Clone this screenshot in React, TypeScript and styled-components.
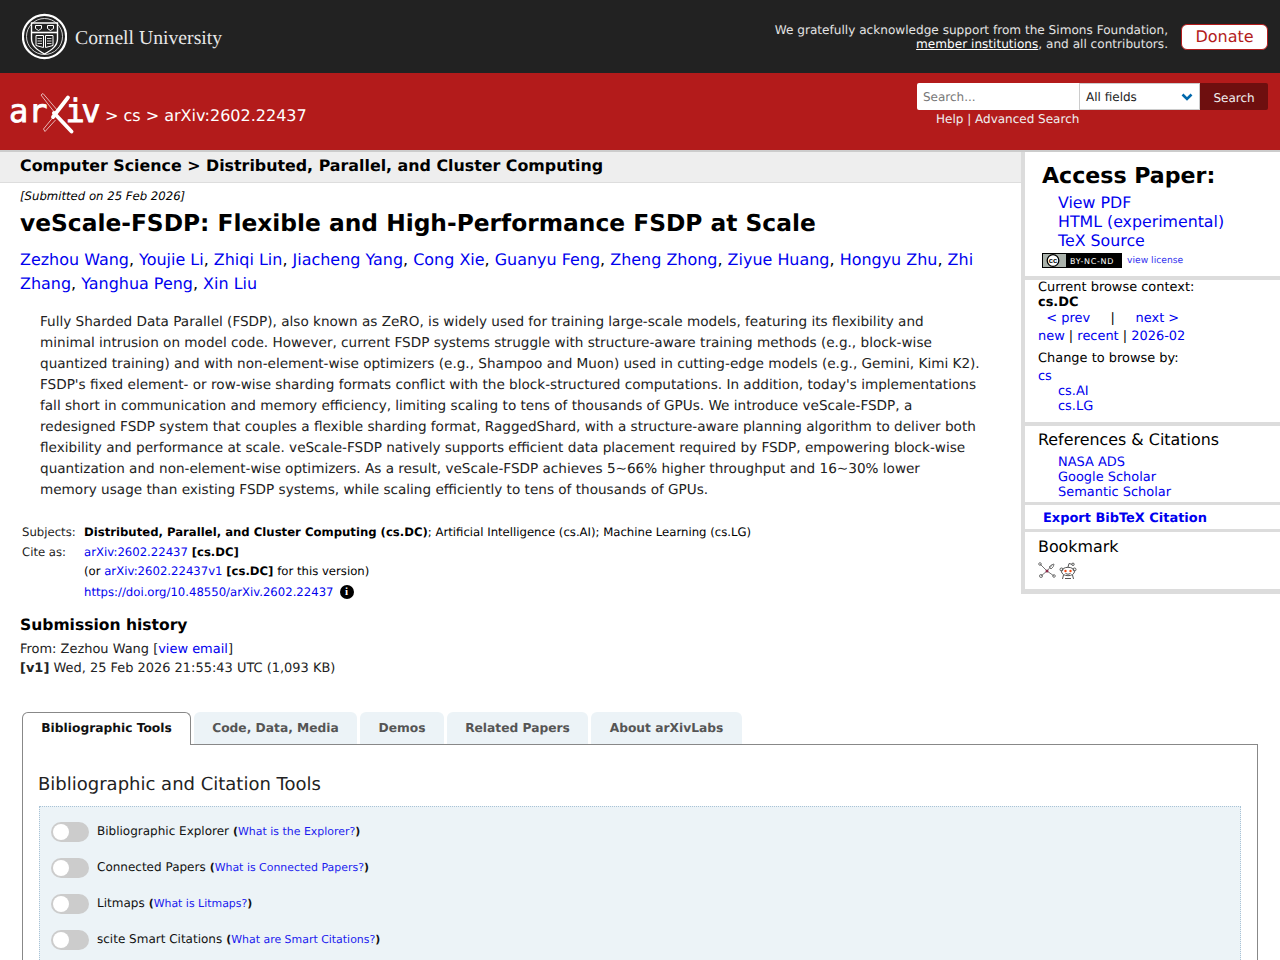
import React from "react";
import styled, { createGlobalStyle } from "styled-components";

const Global = createGlobalStyle`
  html, body { margin: 0; padding: 0; background: #fff; }
  body { font-family: "DejaVu Sans", "Liberation Sans", sans-serif; font-size: 14px; color: #000; height: 960px; overflow: hidden; text-rendering: geometricPrecision; }
  a { color: #0000ee; text-decoration: none; }
`;

const CornellBar = styled.div`
  height: 73px; background: #222; display: flex; align-items: flex-start; justify-content: space-between;
  padding: 13px 12px 0 22px; box-sizing: border-box; color: #ddd;
`;
const CornellLogo = styled.div`display: flex; align-items: center; gap: 8px; height: 47px;`;
const CornellWord = styled.span`
  font-family: "Liberation Serif", serif; font-size: 19.7px; color: #e8e8e8; position: relative; top: 2px;
`;
const Support = styled.div`display: flex; align-items: center; gap: 13px; height: 47px;`;
const SupportText = styled.div`
  text-align: right; font-size: 12.1px; line-height: 14px; color: #e4e4e4;
  a { color: #fff; text-decoration: underline; }
`;
const DonateButton = styled.a`
  width: 87px; height: 26px; box-sizing: border-box; background: #fff; border: 1px solid #b31b1b; border-radius: 6px;
  color: #b31b1b; font-size: 16px; line-height: 23px; text-align: center; display: block;
`;

const RedBar = styled.div`
  height: 77px; background: #b31b1b; display: flex; justify-content: space-between; padding: 10px 12px 0 10px;
  box-sizing: border-box; color: #fff;
`;
const Crumbs = styled.div`display: flex; align-items: center; height: 60px; font-size: 16px; color: #fff; gap: 5px;`;
const CrumbText = styled.span`position: relative; top: 2px;`;
const ArxivLogo = styled.div`
  position: relative; width: 90px; height: 40px; display: flex; align-items: center; justify-content: space-between;
`;
const LogoText = styled.span<{ $tight?: boolean }>`
  font-family: "DejaVu Sans Mono", monospace; font-weight: 400; font-size: 32px; line-height: 40px; color: #fff; position: relative; top: -2px;
  -webkit-text-stroke: 0.8px #fff;
  letter-spacing: ${(p) => (p.$tight ? "-3.5px" : "0")};
  margin: ${(p) => (p.$tight ? "0 3px 0 0" : "0 0 0 -1px")};
`;
const LogoX = styled.svg`position: absolute; left: 30px; top: 0;`;
const SearchArea = styled.div`display: flex; flex-direction: column; width: 351px;`;
const SearchRow = styled.div`display: flex; height: 27px;`;
const SearchInput = styled.div`
  width: 162px; box-sizing: border-box; background: #fff; color: #777; font-size: 12px; line-height: 29px; padding-left: 6px; border-radius: 2px 0 0 2px;
`;
const SearchSelect = styled.div`
  width: 121px; box-sizing: border-box; background: #fff; border: 1px solid #ccc; color: #222; font-size: 12px; line-height: 27px;
  display: flex; justify-content: space-between; align-items: center; padding: 0 6px;
`;
const SelectLabel = styled.span`position: relative; top: 1px;`;
const SearchButton = styled.div`
  width: 68px; background: #6e0f0f; color: #f0f0f0; font-size: 12px; line-height: 31px; text-align: center; border-radius: 0 2px 2px 0;
`;
const SearchLinks = styled.div`font-size: 12px; line-height: 14px; color: #f0f0f0; padding: 2px 0 0 19px;`;

const Shell = styled.div`display: flex; align-items: flex-start; border-top: 2px solid #ccc; height: 808px; overflow: hidden;`;
const Main = styled.main`flex: 1; min-width: 0;`;
const Side = styled.aside`
  width: 259px; flex: none; background: #dcdcdc; border-left: 4px solid #dcdcdc; border-bottom: 5px solid #dcdcdc; box-sizing: border-box;
`;
const SideBlock = styled.div<{ $h: number; $gap?: number }>`
  background: #fff; height: ${(p) => p.$h}px; margin-bottom: ${(p) => p.$gap ?? 4}px; padding-left: 13px; box-sizing: border-box; overflow: hidden;
`;
const AccessTitle = styled.h2`margin: 0; padding: 11px 0 0 4px; font-size: 22.1px; line-height: 27px; font-weight: 700;`;
const AccessLinks = styled.div`
  padding: 3px 0 0 20px; font-size: 15.8px; line-height: 19px;
  a { display: block; }
`;
const LicenseRow = styled.div`display: flex; align-items: center; gap: 5px; padding: 3px 0 0 4px;`;
const Badge = styled.svg`display: block;`;
const LicenseLink = styled.a`font-size: 9.2px; color: #3333ee;`;
const Line = styled.div<{ $h?: number; $pad?: number }>`
  font-size: 12.95px; line-height: ${(p) => p.$h ?? 15}px; height: ${(p) => p.$h ?? 15}px; padding-left: ${(p) => p.$pad ?? 0}px; white-space: pre;
`;
const Gap = styled.div<{ $h: number }>`height: ${(p) => p.$h}px;`;
const SideHeading = styled.h3<{ $top: number }>`margin: 0; font-size: 15.9px; line-height: 19px; font-weight: 400; padding-top: ${(p) => p.$top}px;`;
const SideList = styled.div`
  padding: 6px 0 0 20px; font-size: 12.95px; line-height: 15px;
  a { display: block; }
`;
const ExportLink = styled.a`display: block; padding: 6px 0 0 5px; font-size: 12.95px; line-height: 16px; font-weight: 700;`;
const BookIcons = styled.div`display: flex; gap: 3px; padding-top: 6px;`;

const Subheader = styled.div`
  height: 31px; background: #eee; border-bottom: 1px solid #ddd; box-sizing: border-box; padding: 4px 0 0 20px; font-size: 15.85px; line-height: 20px; font-weight: 700;
`;
const Paper = styled.div`padding: 0 20px;`;
const Dateline = styled.div`font-size: 11.69px; font-style: italic; line-height: 14px; padding-top: 6px;`;
const Title = styled.h1`margin: 0; font-size: 23.33px; line-height: 29px; font-weight: 700; padding-top: 6px;`;
const Authors = styled.div`font-size: 15.96px; line-height: 24px; padding-top: 10px; width: 970px;`;
const Abstract = styled.blockquote`
  margin: 0; padding: 16px 0 0 20px; width: 940px; font-size: 13.6px; line-height: 21px; color: #222;
`;
const Meta = styled.table`
  border-collapse: collapse; margin: 24px 0 0 0; font-size: 11.68px; line-height: 14px;
  td { padding: 0 2px; vertical-align: top; }
  td:first-child { width: 56px; padding-right: 4px; color: #222; }
  tr { height: 20px; }
  tr:nth-child(2) { height: 19px; }
  tr:nth-child(3) { height: 21px; }
`;
const InfoDot = styled.span`
  display: inline-block; width: 14px; height: 14px; border-radius: 50%; background: #000; color: #fff; font-family: "Liberation Serif", serif; font-weight: 700; font-size: 11px; line-height: 14px; text-align: center; margin-left: 6px; position: relative; top: -1px;
`;
const HistoryTitle = styled.h2`margin: 0; padding-top: 10px; font-size: 15.55px; line-height: 20px; font-weight: 700;`;
const History = styled.div`font-size: 12.96px; line-height: 19px; padding-top: 5px; color: #222;`;

const Tabs = styled.div`display: flex; align-items: flex-start; gap: 3px; margin: 34px 0 0 22px; height: 33px; position: relative; z-index: 1;`;
const Tab = styled.div<{ $active?: boolean; $w: number }>`
  box-sizing: border-box; width: ${(p) => p.$w}px; height: ${(p) => (p.$active ? 33 : 32)}px; text-align: center;
  padding-top: ${(p) => (p.$active ? 8 : 9)}px; font-size: 12.25px; line-height: 15px; font-weight: 700; border-radius: 6px 6px 0 0;
  background: ${(p) => (p.$active ? "#fff" : "#ecf3f7")}; color: ${(p) => (p.$active ? "#111" : "#555")};
  border: ${(p) => (p.$active ? "1px solid #888" : "0")}; border-bottom: 0; white-space: nowrap;
`;
const Panel = styled.div`
  margin: -1px 0 0 22px; border: 1px solid #888; padding: 28px 16px 0 15px; box-sizing: border-box; height: 300px; width: 1236px;
`;
const PanelTitle = styled.h3`margin: 0; font-size: 18px; line-height: 24px; font-weight: 400; color: #222;`;
const ToolBox = styled.div`
  margin-top: 9px; margin-left: 1px; background: #ecf3f7; border: 1px dotted #a9c3d6; padding: 7px 11px 0; width: 1202px; height: 200px; box-sizing: border-box;
`;
const ToolRow = styled.div`display: flex; align-items: center; height: 36px;`;
const Toggle = styled.span`
  position: relative; width: 38px; height: 20px; border-radius: 10px; background: #ccc; flex: none; margin-right: 8px;
  &::after { content: ""; position: absolute; left: 2px; top: 2px; width: 16px; height: 16px; border-radius: 50%; background: #fff; }
`;
const ToolName = styled.span`font-size: 12px; color: #111; position: relative; top: -1px;`;
const ToolHelp = styled.span`font-size: 10.95px; font-weight: 700; margin-left: 4px; color: #111; position: relative; top: -1px; a { font-weight: 400; color: #1a1aee; }`;

const Join = ({ items }: { items: string[] }) => (
  <>
    {items.map((a, i) => (
      <React.Fragment key={a}>
        <a href="#">{a}</a>
        {i < items.length - 1 ? ", " : ""}
      </React.Fragment>
    ))}
  </>
);

const Seal = () => (
  <svg width="45" height="47" viewBox="0 0 45 47" fill="none" stroke="#fff">
    <circle cx="22.5" cy="23.5" r="21.6" strokeWidth="2.2" />
    <circle cx="22.5" cy="23.5" r="18" strokeWidth="0.8" />
    <path d="M9.500 10h26v16c0 7-6 11-13 15C15.500 37 9.500 33 9.500 26z" strokeWidth="1.4" />
    <path d="M9.500 19.500h26" strokeWidth="1.6" />
    <path d="M13.500 12.500h6v3l-3 2-3-2zM25.500 12.500h6v3l-3 2-3-2z" strokeWidth="1" />
    <path d="M14 22.500h7.500v12l-7.500-2zM31 22.500h-7.500v12l7.500-2z" strokeWidth="1" />
    <path d="M15.500 25.500h4.500M15.500 28h4.500M15.500 30.500h4.500M25 25.500h4.500M25 28h4.500M25 30.500h4.500" strokeWidth="0.8" />
  </svg>
);

const SpiralX = () => (
  <LogoX width="34" height="41" viewBox="0 0 34 41" fill="none">
    <path d="M1 2 L3 0.500 L18 18 L15 20 Z" stroke="#ecc8c8" strokeWidth="0.9" />
    <path d="M12.500 25 L3.500 36 L5 38.500 L15.500 27" stroke="#ecc8c8" strokeWidth="0.9" />
    <path d="M14 20 L31.500 38.500" stroke="#fff" strokeWidth="3.800" strokeLinecap="round" />
    <path d="M13 24 L28 4.500" stroke="#fff" strokeWidth="3.800" strokeLinecap="round" />
  </LogoX>
);

const Chevron = () => (
  <svg width="12" height="8" viewBox="0 0 12 8" fill="none">
    <path d="M1.500 1.500 L6 6 L10.500 1.500" stroke="#0068ac" strokeWidth="2.600" />
  </svg>
);

const CcBadge = () => (
  <Badge width="80" height="15" viewBox="0 0 80 15">
    <rect x="0" y="0" width="80" height="15" fill="#000" />
    <rect x="1" y="1" width="23" height="13" fill="#aab2ab" />
    <circle cx="11" cy="7.500" r="5.800" fill="#fff" stroke="#000" strokeWidth="1.300" />
    <text x="11" y="10" fontSize="7.500" fontWeight="700" textAnchor="middle" fontFamily="Liberation Sans" fill="#000">cc</text>
    <text x="28" y="10.500" fontSize="8" fontFamily="DejaVu Sans" letterSpacing="0.700" fill="#fff">BY-NC-ND</text>
  </Badge>
);

const ScienceWise = () => (
  <svg width="18" height="16" viewBox="0 0 18 16" fill="none" stroke="#777" strokeWidth="1">
    <path d="M9 9 L2 2 M9 9 L16 14 M9 9 L3 14 M9 9 L15 2" />
    <circle cx="2" cy="2" r="1.300" />
    <circle cx="3" cy="14" r="1.500" />
    <circle cx="16" cy="14" r="1.300" />
    <path d="M11 5 q3-3 5-3 q0 3-3 5z" />
    <circle cx="9" cy="9" r="1.500" fill="#8b2a4a" stroke="none" />
  </svg>
);

const Reddit = () => (
  <svg width="18" height="18" viewBox="0 0 18 18" fill="none" stroke="#555" strokeWidth="1">
    <ellipse cx="9" cy="9.500" rx="6.500" ry="4.200" fill="#fff" />
    <circle cx="2.500" cy="7.500" r="1.500" />
    <circle cx="15.500" cy="7.500" r="1.500" />
    <path d="M9 5 L10 1.500 L13 2.300" />
    <circle cx="14" cy="2.300" r="1.200" />
    <circle cx="6.500" cy="9" r="1.200" fill="#f04a14" stroke="none" />
    <circle cx="11.500" cy="9" r="1.200" fill="#f04a14" stroke="none" />
    <path d="M4.500 13 L3.500 17 M13.500 13 L14.500 17 M6 16.500 h6 M6.500 11.500 q2.500 1.500 5 0" />
  </svg>
);

const tabs: [string, number][] = [
  ["Bibliographic Tools", 169],
  ["Code, Data, Media", 163],
  ["Demos", 84],
  ["Related Papers", 141],
  ["About arXivLabs", 151],
];

const tools = [
  ["Bibliographic Explorer", "What is the Explorer?"],
  ["Connected Papers", "What is Connected Papers?"],
  ["Litmaps", "What is Litmaps?"],
  ["scite Smart Citations", "What are Smart Citations?"],
];

export default function App() {
  return (
    <>
      <Global />
      <CornellBar>
        <CornellLogo>
          <Seal />
          <CornellWord>Cornell University</CornellWord>
        </CornellLogo>
        <Support>
          <SupportText>
            We gratefully acknowledge support from the Simons Foundation,
            <br />
            <a href="#">member institutions</a>, and all contributors.
          </SupportText>
          <DonateButton href="#">Donate</DonateButton>
        </Support>
      </CornellBar>
      <RedBar>
        <Crumbs>
          <ArxivLogo>
            <LogoText>ar</LogoText>
            <SpiralX />
            <LogoText $tight>iv</LogoText>
          </ArxivLogo>
          <CrumbText>&gt; cs &gt; arXiv:2602.22437</CrumbText>
        </Crumbs>
        <SearchArea>
          <SearchRow>
            <SearchInput>Search...</SearchInput>
            <SearchSelect><SelectLabel>All fields</SelectLabel><Chevron /></SearchSelect>
            <SearchButton>Search</SearchButton>
          </SearchRow>
          <SearchLinks>Help | Advanced Search</SearchLinks>
        </SearchArea>
      </RedBar>
      <Shell>
        <Main>
          <Subheader>Computer Science &gt; Distributed, Parallel, and Cluster Computing</Subheader>
          <Paper>
            <Dateline>[Submitted on 25 Feb 2026]</Dateline>
            <Title>veScale-FSDP: Flexible and High-Performance FSDP at Scale</Title>
            <Authors>
              <Join items={["Zezhou Wang", "Youjie Li", "Zhiqi Lin", "Jiacheng Yang", "Cong Xie", "Guanyu Feng", "Zheng Zhong", "Ziyue Huang", "Hongyu Zhu", "Zhi Zhang", "Yanghua Peng", "Xin Liu"]} />
            </Authors>
            <Abstract>
              Fully Sharded Data Parallel (FSDP), also known as ZeRO, is widely used for training large-scale models, featuring its flexibility and minimal intrusion on model code. However, current FSDP systems struggle with structure-aware training methods (e.g., block-wise quantized training) and with non-element-wise optimizers (e.g., Shampoo and Muon) used in cutting-edge models (e.g., Gemini, Kimi K2). FSDP's fixed element- or row-wise sharding formats conflict with the block-structured computations. In addition, today's implementations fall short in communication and memory efficiency, limiting scaling to tens of thousands of GPUs. We introduce veScale-FSDP, a redesigned FSDP system that couples a flexible sharding format, RaggedShard, with a structure-aware planning algorithm to deliver both flexibility and performance at scale. veScale-FSDP natively supports efficient data placement required by FSDP, empowering block-wise quantization and non-element-wise optimizers. As a result, veScale-FSDP achieves 5~66% higher throughput and 16~30% lower memory usage than existing FSDP systems, while scaling efficiently to tens of thousands of GPUs.
            </Abstract>
            <Meta>
              <tbody>
                <tr>
                  <td>Subjects:</td>
                  <td><b>Distributed, Parallel, and Cluster Computing (cs.DC)</b>; Artificial Intelligence (cs.AI); Machine Learning (cs.LG)</td>
                </tr>
                <tr>
                  <td>Cite as:</td>
                  <td><a href="#">arXiv:2602.22437</a> <b>[cs.DC]</b></td>
                </tr>
                <tr>
                  <td></td>
                  <td>(or <a href="#">arXiv:2602.22437v1</a> <b>[cs.DC]</b> for this version)</td>
                </tr>
                <tr>
                  <td></td>
                  <td><a href="#">https://doi.org/10.48550/arXiv.2602.22437</a><InfoDot>i</InfoDot></td>
                </tr>
              </tbody>
            </Meta>
            <HistoryTitle>Submission history</HistoryTitle>
            <History>
              From: Zezhou Wang [<a href="#">view email</a>]
              <br />
              <b>[v1]</b> Wed, 25 Feb 2026 21:55:43 UTC (1,093 KB)
            </History>
          </Paper>
          <Tabs>
            {tabs.map(([label, w], i) => (
              <Tab key={label} $w={w} $active={i === 0}>{label}</Tab>
            ))}
          </Tabs>
          <Panel>
            <PanelTitle>Bibliographic and Citation Tools</PanelTitle>
            <ToolBox>
              {tools.map(([name, help]) => (
                <ToolRow key={name}>
                  <Toggle />
                  <ToolName>{name}</ToolName>
                  <ToolHelp>(<a href="#">{help}</a>)</ToolHelp>
                </ToolRow>
              ))}
            </ToolBox>
          </Panel>
        </Main>
        <Side>
          <SideBlock $h={124}>
            <AccessTitle>Access Paper:</AccessTitle>
            <AccessLinks>
              <a href="#">View PDF</a>
              <a href="#">HTML (experimental)</a>
              <a href="#">TeX Source</a>
            </AccessLinks>
            <LicenseRow>
              <CcBadge />
              <LicenseLink href="#">view license</LicenseLink>
            </LicenseRow>
          </SideBlock>
          <SideBlock $h={142}>
            <Gap $h={1} />
            <Line $h={14}>Current browse context:</Line>
            <Line><b>cs.DC</b></Line>
            <Line $h={18}>  <a href="#">&lt; prev</a>     |     <a href="#">next &gt;</a></Line>
            <Line $h={18}><a href="#">new</a> | <a href="#">recent</a> | <a href="#">2026-02</a></Line>
            <Gap $h={5} />
            <Line>Change to browse by:</Line>
            <Gap $h={3} />
            <Line><a href="#">cs</a></Line>
            <Line $pad={20}><a href="#">cs.AI</a></Line>
            <Line $pad={20}><a href="#">cs.LG</a></Line>
          </SideBlock>
          <SideBlock $h={76} $gap={3}>
            <SideHeading $top={4}>References &amp; Citations</SideHeading>
            <SideList>
              <a href="#">NASA ADS</a>
              <a href="#">Google Scholar</a>
              <a href="#">Semantic Scholar</a>
            </SideList>
          </SideBlock>
          <SideBlock $h={24} $gap={3}>
            <ExportLink href="#">Export BibTeX Citation</ExportLink>
          </SideBlock>
          <SideBlock $h={57} $gap={0}>
            <SideHeading $top={5}>Bookmark</SideHeading>
            <BookIcons>
              <ScienceWise />
              <Reddit />
            </BookIcons>
          </SideBlock>
        </Side>
      </Shell>
    </>
  );
}
